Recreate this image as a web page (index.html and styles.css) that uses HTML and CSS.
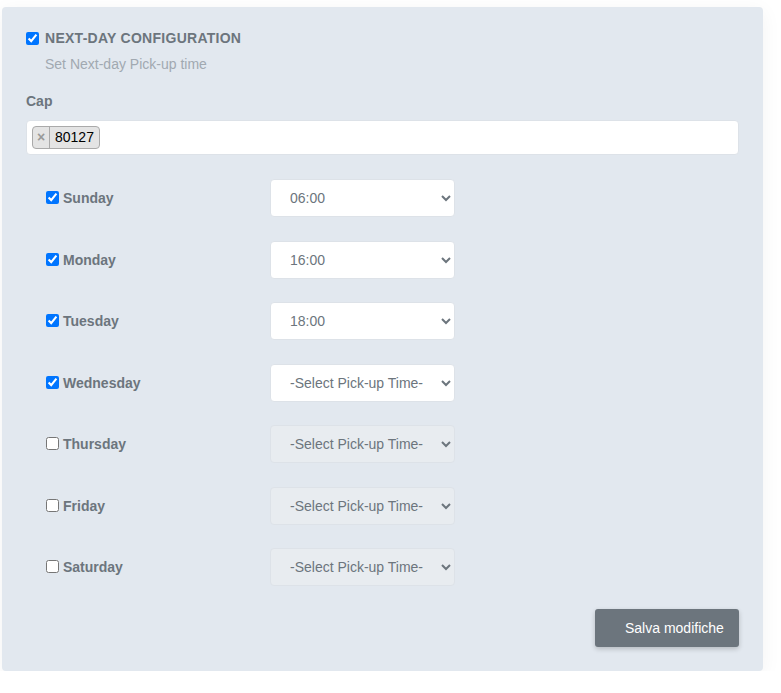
FILE: index.html
```html
<!DOCTYPE html>
<html>
<head>
<meta charset="utf-8">
<link rel="stylesheet" href="styles.css">
</head>
<body>
<div class="panel">
  <div class="head">
    <input type="checkbox" class="cb-main" checked>
    <span class="title">NEXT-DAY CONFIGURATION</span>
  </div>
  <div class="subtitle">Set Next-day Pick-up time</div>
  <div class="cap-label">Cap</div>
  <div class="tag-input">
    <span class="tag"><span class="tag-x">×</span><span class="tag-text">80127</span></span>
  </div>
  <div class="days">
    <div class="day">
      <label class="day-label"><input type="checkbox" checked>Sunday</label>
      <select class="time"><option>06:00</option></select>
    </div>
    <div class="day">
      <label class="day-label"><input type="checkbox" checked>Monday</label>
      <select class="time"><option>16:00</option></select>
    </div>
    <div class="day">
      <label class="day-label"><input type="checkbox" checked>Tuesday</label>
      <select class="time"><option>18:00</option></select>
    </div>
    <div class="day">
      <label class="day-label"><input type="checkbox" checked>Wednesday</label>
      <select class="time"><option>-Select Pick-up Time-</option></select>
    </div>
    <div class="day">
      <label class="day-label"><input type="checkbox">Thursday</label>
      <select class="time" disabled><option>-Select Pick-up Time-</option></select>
    </div>
    <div class="day">
      <label class="day-label"><input type="checkbox">Friday</label>
      <select class="time" disabled><option>-Select Pick-up Time-</option></select>
    </div>
    <div class="day">
      <label class="day-label"><input type="checkbox">Saturday</label>
      <select class="time" disabled><option>-Select Pick-up Time-</option></select>
    </div>
  </div>
  <div class="actions">
    <button class="save">Salva modifiche</button>
  </div>
</div>
</body>
</html>
```
FILE: styles.css
```css
html, body {
  margin: 0;
  padding: 0;
  background: #ffffff;
}
body {
  font-family: "Liberation Sans", Arial, sans-serif;
  font-size: 14px;
  line-height: 20px;
  color: #6c757d;
  padding: 7px 18px 0 2px;
}
.panel {
  background: #e2e8ef;
  border-radius: 4px;
  padding: 21px 24px 24px 24px;
  box-shadow: 0 4px 20px rgba(0, 0, 0, 0.05);
}
.head {
  display: flex;
  align-items: center;
  height: 20px;
}
.cb-main {
  margin: 0 6px 0 0;
  width: 13px;
  height: 13px;
}
.title {
  font-weight: bold;
  letter-spacing: 0.27px;
  color: #6c757d;
}
.subtitle {
  margin: 6px 0 0 19px;
  color: #a1a9b1;
}
.cap-label {
  margin-top: 17px;
  font-weight: bold;
  color: #6c757d;
}
.tag-input {
  margin-top: 9px;
  height: 35px;
  box-sizing: border-box;
  background: #fff;
  border: 1px solid #dde2e8;
  border-radius: 4px;
  padding: 5px 5px;
  display: flex;
  align-items: flex-start;
}
.tag {
  display: flex;
  align-items: stretch;
  height: 23px;
  box-sizing: border-box;
  background: #e4e4e4;
  border: 1px solid #aaa;
  border-radius: 4px;
  color: #000;
  line-height: 21px;
}
.tag-x {
  width: 16px;
  text-align: center;
  color: #999;
  font-weight: bold;
  border-right: 1px solid #aaa;
}
.tag-text {
  padding: 0 5px 0 5px;
}
.days {
  margin-top: 24px;
  padding-left: 20px;
  display: flex;
  flex-direction: column;
  gap: 23.5px;
}
.day {
  display: flex;
  align-items: center;
}
.day-label {
  width: 224px;
  display: flex;
  align-items: center;
  font-weight: bold;
  color: #6c757d;
}
.day-label input {
  margin: 0 4px 1px 0;
  width: 13px;
  height: 13px;
}
.time {
  width: 185px;
  height: 38px;
  box-sizing: border-box;
  font-family: "Liberation Sans", Arial, sans-serif;
  font-size: 14px;
  color: #6c757d;
  background: #fff;
  border: 1px solid #dde2e8;
  border-radius: 4px;
  padding: 0 8px 0 15px;
}
.time:disabled {
  background: #e8ecf0;
  color: #6c757d;
  opacity: 1;
}
.actions {
  margin-top: 23px;
  display: flex;
  justify-content: flex-end;
}
.save {
  width: 144px;
  height: 38px;
  background: #6c757d;
  color: #fff;
  border: none;
  border-radius: 3px;
  font-family: "Liberation Sans", Arial, sans-serif;
  font-size: 14px;
  padding: 0 14px 0 30px;
  text-align: left;
  box-shadow: 0 2px 5px rgba(0, 0, 0, 0.2);
}
```
